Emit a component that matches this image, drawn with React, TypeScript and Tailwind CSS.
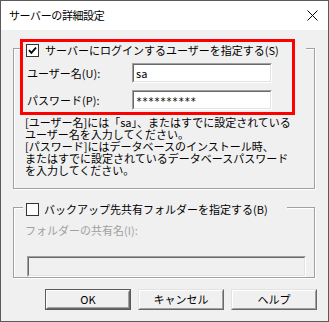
import React from "react";

const jp = "font-['Noto_Sans_CJK_JP','Noto_Sans',sans-serif]";

function Check({ checked }: { checked: boolean }) {
  return (
    <span className="w-[13px] h-[13px] border border-[#333333] bg-white flex items-center justify-center shrink-0">
      {checked && (
        <svg width="9" height="9" viewBox="0 0 9 9">
          <path d="M1 4.2 L3.4 6.8 L8 1.6" stroke="#000" strokeWidth="1.8" fill="none" />
        </svg>
      )}
    </span>
  );
}

function Button({ label, def }: { label: string; def?: boolean }) {
  if (def) {
    return (
      <div className="w-[86px] h-[21px] border border-[#5a5a5a] flex">
        <div className="flex-1 border border-t-white border-l-white border-b-[#696969] border-r-[#696969] flex">
          <div className="flex-1 border border-t-[#f0f0f0] border-l-[#f0f0f0] border-b-[#a0a0a0] border-r-[#a0a0a0] flex items-center justify-center text-[11px] leading-none text-black">
            {label}
          </div>
        </div>
      </div>
    );
  }
  return (
    <div className="w-[86px] h-[21px] border border-t-[#e3e3e3] border-l-[#e3e3e3] border-b-[#696969] border-r-[#696969] flex">
      <div className="flex-1 border border-t-white border-l-white border-b-[#a0a0a0] border-r-[#a0a0a0] flex items-center justify-center text-[11px] leading-none text-black">
        {label}
      </div>
    </div>
  );
}

export default function App() {
  return (
    <div className={`w-[329px] h-[322px] border border-[#5a5a5a] bg-[#f0f0f0] flex flex-col relative ${jp} text-black`}>
      {/* Title bar */}
      <div className="h-[29px] bg-white flex items-center justify-between shrink-0">
        <span className="ml-[8px] text-[11px] tracking-[-0.4px] text-black leading-none">サーバーの詳細設定</span>
        <svg className="mr-[10px]" width="11" height="11" viewBox="0 0 11 11">
          <path d="M0.5 0.5 L10.5 10.5 M10.5 0.5 L0.5 10.5" stroke="#000" strokeWidth="1" />
        </svg>
      </div>

      {/* Body */}
      <div className="flex flex-col">
        {/* Group 1 */}
        <div className="mt-[18px] ml-[12px] w-[302px] h-[141px] border border-[#a0a0a0] shadow-[inset_1px_1px_0_#ffffff,1px_1px_0_#ffffff] flex flex-col">
          <div className="-mt-[9px] ml-[9px] w-[283px] h-[20px] bg-[#f0f0f0] flex items-center pl-[3px]">
            <Check checked />
            <span className="ml-[6px] text-[11px] leading-none whitespace-nowrap">サーバーにログインするユーザーを指定する(S)</span>
          </div>
          <div className="mt-[3px] flex items-center h-[20px]">
            <span className="ml-[13px] w-[105px] text-[11px] leading-none whitespace-nowrap">ユーザー名(U):</span>
            <div className="w-[140px] h-[20px] border border-t-[#a0a0a0] border-l-[#a0a0a0] border-b-white border-r-white flex">
              <div className="flex-1 border border-t-[#696969] border-l-[#696969] border-b-[#e3e3e3] border-r-[#e3e3e3] bg-white flex items-center pl-[2px] text-[11px] leading-none">
                sa
              </div>
            </div>
          </div>
          <div className="mt-[7px] flex items-center h-[20px]">
            <span className="ml-[13px] w-[105px] text-[11px] leading-none whitespace-nowrap">パスワード(P):</span>
            <div className="w-[140px] h-[20px] border border-t-[#a0a0a0] border-l-[#a0a0a0] border-b-white border-r-white flex">
              <div className="flex-1 border border-t-[#696969] border-l-[#696969] border-b-[#e3e3e3] border-r-[#e3e3e3] bg-white flex items-center pl-[2px] text-[10px] leading-none font-['DejaVu_Sans_Mono',monospace] pt-[3px]">
                **********
              </div>
            </div>
          </div>
          <div className="mt-[6px] ml-[11px] text-[11px] leading-[12px] whitespace-nowrap flex flex-col">
            <span>[ユーザー名]には「sa」、またはすでに設定されている</span>
            <span>ユーザー名を入力してください。</span>
            <span>[パスワード]にはデータベースのインストール時、</span>
            <span>またはすでに設定されているデータベースパスワード</span>
            <span>を入力してください。</span>
          </div>
        </div>

        {/* Group 2 */}
        <div className="mt-[18px] ml-[12px] w-[302px] h-[71px] border border-[#a0a0a0] shadow-[inset_1px_1px_0_#ffffff,1px_1px_0_#ffffff] flex flex-col">
          <div className="-mt-[9px] ml-[9px] w-[264px] h-[20px] bg-[#f0f0f0] flex items-center pl-[3px]">
            <Check checked={false} />
            <span className="ml-[5px] text-[11px] leading-none whitespace-nowrap">バックアップ先共有フォルダーを指定する(B)</span>
          </div>
          <div className="mt-[6px] ml-[11px] text-[11px] leading-none text-[#a0a0a0] whitespace-nowrap">
            フォルダーの共有名(I):
          </div>
          <div className="mt-[20px] ml-[13px] w-[279px] h-[21px] border border-t-[#a0a0a0] border-l-[#a0a0a0] border-b-white border-r-white flex">
            <div className="flex-1 border border-t-[#696969] border-l-[#696969] border-b-[#e3e3e3] border-r-[#e3e3e3] bg-[#f0f0f0]" />
          </div>
        </div>

        {/* Buttons */}
        <div className="mt-[11px] ml-[44px] flex gap-[7px]">
          <Button label="OK" def />
          <Button label="キャンセル" />
          <Button label="ヘルプ" />
        </div>
      </div>

      {/* Red annotation */}
      <div className="absolute left-[19px] top-[38px] w-[275px] h-[76px] border-[3px] border-[#ff0000] pointer-events-none" />
    </div>
  );
}
